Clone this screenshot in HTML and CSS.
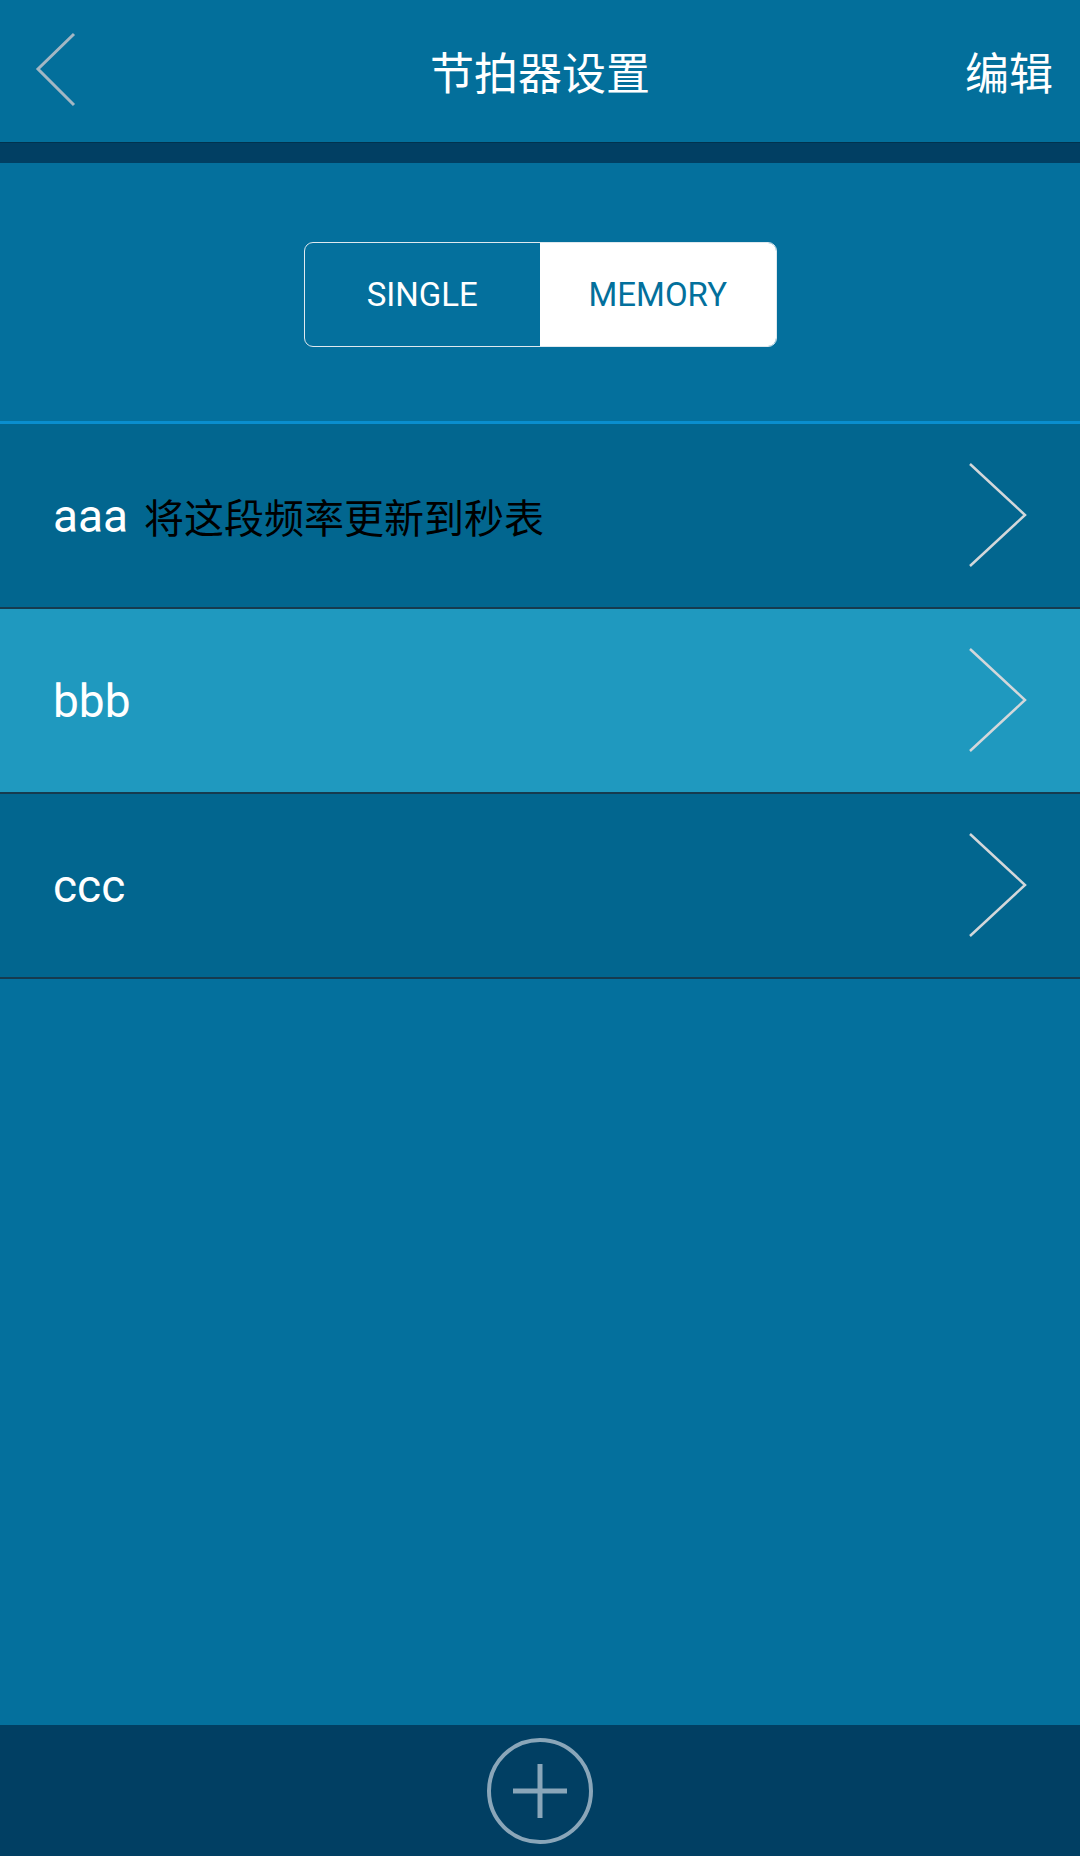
FILE: index.html
```html
<!doctype html>
<html>
<head>
  <title>节拍器设置</title>
  <meta charset="utf-8">
  <link rel="stylesheet" href="styles.css">
</head>
<body>
  <div class="app">
    <div class="header">
      <div class="back">
        <svg width="44" height="80" viewBox="0 0 44 80">
          <polyline points="40,3 4,38 40,74" fill="none" stroke="#a3b7c4" stroke-width="3"/>
        </svg>
      </div>
      <div class="title">节拍器设置</div>
      <div class="edit">编辑</div>
    </div>
    <div class="shade"></div>

    <div class="switch-area">
      <div class="switch">
        <div class="seg">SINGLE</div>
        <div class="seg active">MEMORY</div>
      </div>
    </div>

    <div class="list">
      <div class="row">
        <span class="name">aaa</span> <span class="note">将这段频率更新到秒表</span>
        <svg class="arrow" width="60" height="108" viewBox="0 0 60 108">
          <polyline points="2,2 57,53 2,104" fill="none" stroke="#d3d7da" stroke-width="2.5"/>
        </svg>
      </div>
      <div class="row current">
        <span class="name">bbb</span>
        <svg class="arrow" width="60" height="108" viewBox="0 0 60 108">
          <polyline points="2,2 57,53 2,104" fill="none" stroke="#d3d7da" stroke-width="2.5"/>
        </svg>
      </div>
      <div class="row">
        <span class="name">ccc</span>
        <svg class="arrow" width="60" height="108" viewBox="0 0 60 108">
          <polyline points="2,2 57,53 2,104" fill="none" stroke="#d3d7da" stroke-width="2.5"/>
        </svg>
      </div>
    </div>

    <div class="filler"></div>

    <div class="footer">
      <svg width="108" height="108" viewBox="0 0 108 108">
        <circle cx="54" cy="54" r="51" fill="none" stroke="#8aa6b9" stroke-width="4"/>
        <line x1="27" y1="54" x2="81" y2="54" stroke="#8aa6b9" stroke-width="5"/>
        <line x1="54" y1="27" x2="54" y2="81" stroke="#8aa6b9" stroke-width="5"/>
      </svg>
    </div>
  </div>
</body>
</html>
```

FILE: styles.css
```css
body{
  margin: 0;
  background-color: #04709d;
  font-family: Roboto, "Noto Sans CJK SC", sans-serif;
}
.app{
  width: 1080px;
  height: 1856px;
  display: flex;
  flex-direction: column;
}
.header{
  height: 142px;
  background-color: #036f9b;
  display: grid;
  grid-template-columns: 200px 1fr 200px;
  align-items: center;
  color: white;
  font-family: "Noto Sans CJK SC", sans-serif;
  font-size: 44px;
}
.back{
  padding-left: 34px;
  display: flex;
  align-items: center;
}
.title{
  text-align: center;
}
.edit{
  text-align: right;
  padding-right: 27px;
}
.shade{
  height: 20px;
  background-color: #013f63;
  border-top: 1px solid #01334f;
}
.switch-area{
  height: 261px;
  display: flex;
  justify-content: center;
  padding-top: 79px;
  box-sizing: border-box;
  border-bottom: 3px solid #0a8ece;
}
.switch{
  width: 473px;
  height: 105px;
  display: flex;
  border: 1px solid #dfe9ef;
  border-radius: 9px;
  overflow: hidden;
  box-sizing: border-box;
}
.seg{
  flex: 1;
  display: flex;
  align-items: center;
  justify-content: center;
  font-size: 33px;
  color: white;
}
.seg.active{
  background-color: white;
  color: #03709c;
}
.row{
  height: 183px;
  background-color: #02668f;
  border-bottom: 2px solid #163b4f;
  display: flex;
  align-items: center;
  padding-left: 53px;
  padding-right: 52px;
}
.row.current{
  background-color: #1f99bf;
}
.name{
  font-size: 46px;
  color: white;
  white-space: pre;
}
.note{
  font-family: "Noto Sans CJK SC", sans-serif;
  font-size: 40px;
  color: black;
  margin-left: 16px;
}
.arrow{
  margin-left: auto;
}
.filler{
  flex: 1;
}
.footer{
  height: 131px;
  background-color: #013f63;
  display: flex;
  align-items: center;
  justify-content: center;
}
```
